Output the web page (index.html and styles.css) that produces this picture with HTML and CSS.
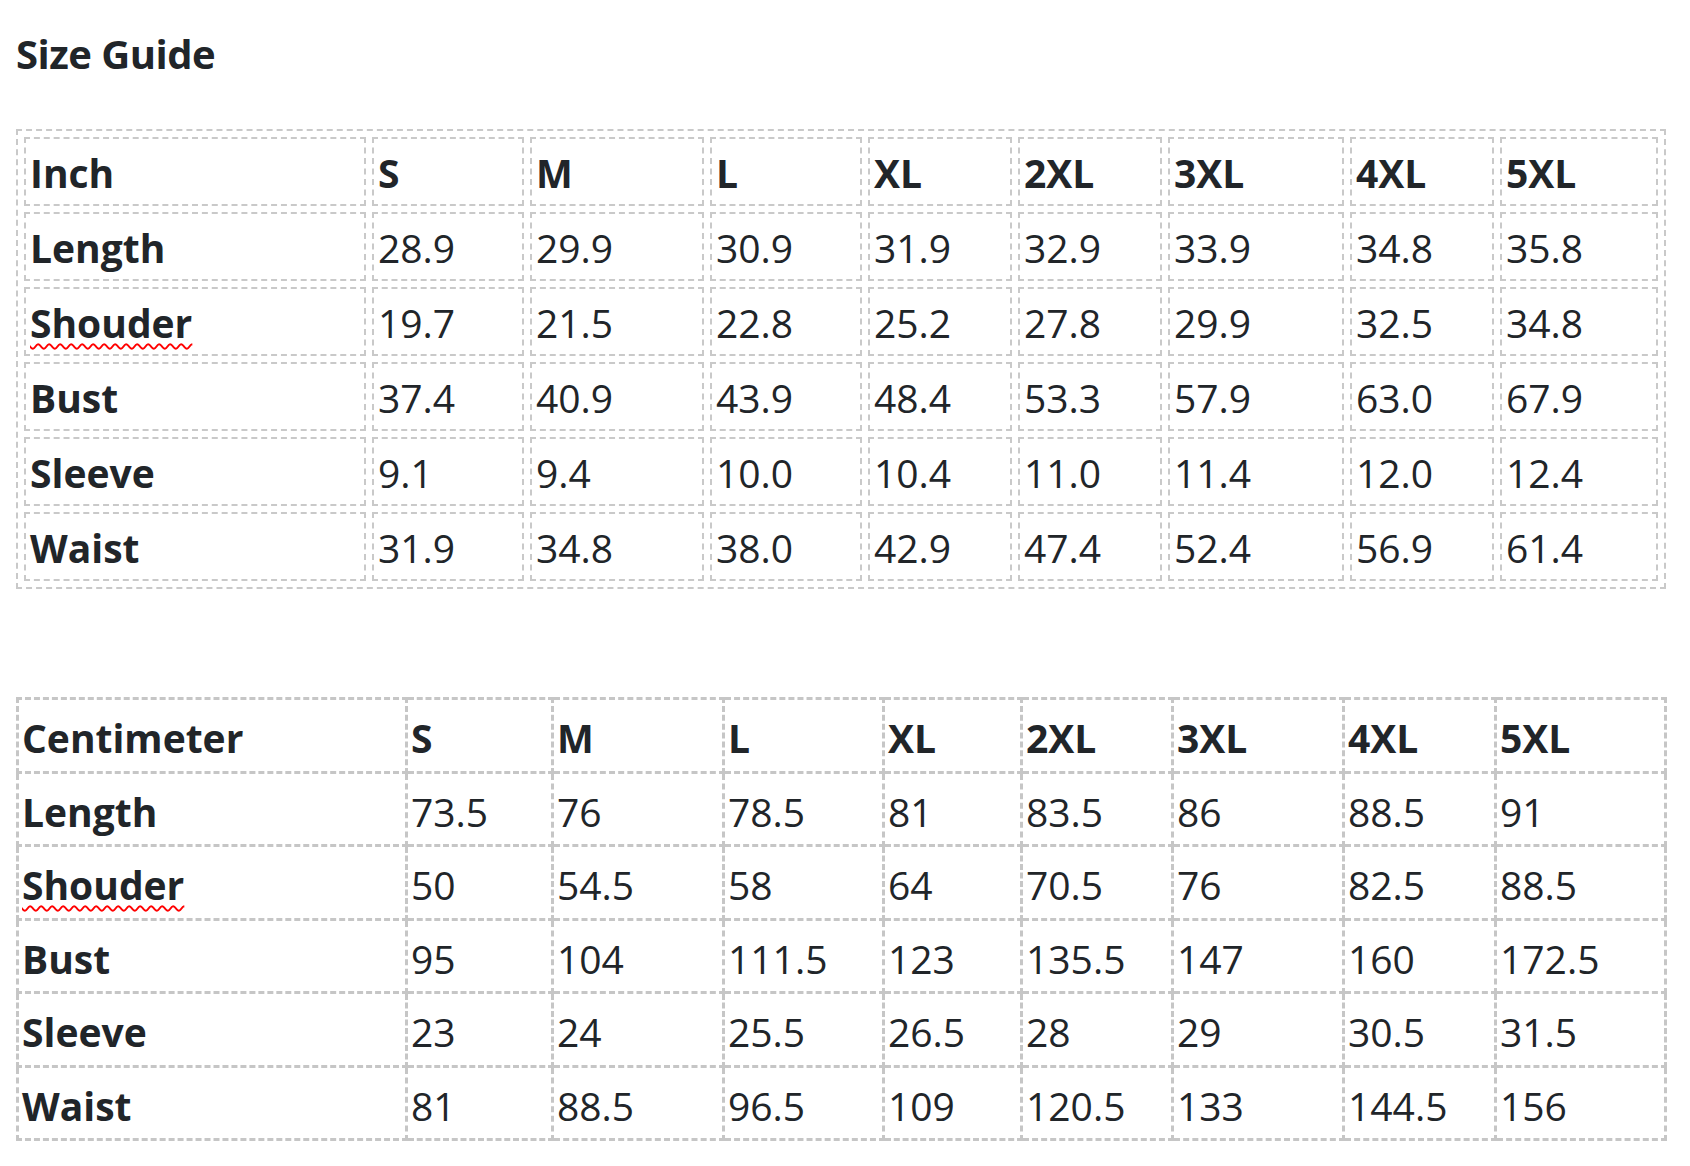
FILE: index.html
```html
<!DOCTYPE html>
<html lang="en">
<head>
<meta charset="utf-8">
<title>Size Guide</title>
<link rel="stylesheet" href="styles.css">
</head>
<body>
<div class="page">
  <h2 class="title">Size Guide</h2>

  <table class="sizes sizes-in">
    <tr>
      <th class="c1">Inch</th><th class="c2">S</th><th class="c3">M</th><th class="c4">L</th><th class="c5">XL</th><th class="c6">2XL</th><th class="c7">3XL</th><th class="c8">4XL</th><th class="c9">5XL</th>
    </tr>
    <tr><th>Length</th><td>28.9</td><td>29.9</td><td>30.9</td><td>31.9</td><td>32.9</td><td>33.9</td><td>34.8</td><td>35.8</td></tr>
    <tr><th><span class="typo">Shouder</span></th><td>19.7</td><td>21.5</td><td>22.8</td><td>25.2</td><td>27.8</td><td>29.9</td><td>32.5</td><td>34.8</td></tr>
    <tr><th>Bust</th><td>37.4</td><td>40.9</td><td>43.9</td><td>48.4</td><td>53.3</td><td>57.9</td><td>63.0</td><td>67.9</td></tr>
    <tr><th>Sleeve</th><td>9.1</td><td>9.4</td><td>10.0</td><td>10.4</td><td>11.0</td><td>11.4</td><td>12.0</td><td>12.4</td></tr>
    <tr><th>Waist</th><td>31.9</td><td>34.8</td><td>38.0</td><td>42.9</td><td>47.4</td><td>52.4</td><td>56.9</td><td>61.4</td></tr>
  </table>

  <table class="sizes sizes-cm">
    <tr>
      <th class="c1">Centimeter</th><th class="c2">S</th><th class="c3">M</th><th class="c4">L</th><th class="c5">XL</th><th class="c6">2XL</th><th class="c7">3XL</th><th class="c8">4XL</th><th class="c9">5XL</th>
    </tr>
    <tr><th>Length</th><td>73.5</td><td>76</td><td>78.5</td><td>81</td><td>83.5</td><td>86</td><td>88.5</td><td>91</td></tr>
    <tr><th><span class="typo">Shouder</span></th><td>50</td><td>54.5</td><td>58</td><td>64</td><td>70.5</td><td>76</td><td>82.5</td><td>88.5</td></tr>
    <tr><th>Bust</th><td>95</td><td>104</td><td>111.5</td><td>123</td><td>135.5</td><td>147</td><td>160</td><td>172.5</td></tr>
    <tr><th>Sleeve</th><td>23</td><td>24</td><td>25.5</td><td>26.5</td><td>28</td><td>29</td><td>30.5</td><td>31.5</td></tr>
    <tr><th>Waist</th><td>81</td><td>88.5</td><td>96.5</td><td>109</td><td>120.5</td><td>133</td><td>144.5</td><td>156</td></tr>
  </table>
</div>
</body>
</html>
```

FILE: styles.css
```css
html, body {
  margin: 0;
  padding: 0;
  background: #ffffff;
}

body {
  font-family: "Open Sans", "Noto Sans", "Liberation Sans", sans-serif;
  color: #212529;
}

.page {
  padding: 29px 0 0 16px;
}

.title {
  margin: 0;
  font-size: 40px;
  line-height: 50px;
  font-weight: 700;
  letter-spacing: -0.5px;
}

.sizes {
  table-layout: fixed;
  font-size: 39px;
  text-align: left;
}

.sizes th,
.sizes td {
  box-sizing: border-box;
  vertical-align: middle;
  white-space: nowrap;
}

.sizes th {
  font-weight: 700;
}

.sizes td {
  font-weight: 400;
}

/* Inch table: separated dashed cells */
.sizes-in {
  margin-top: 50px;
  width: 1650px;
  border: 2px dashed #c9c9c9;
  border-collapse: separate;
  border-spacing: 6px;
}

.sizes-in th,
.sizes-in td {
  border: 2px dashed #c9c9c9;
  padding: 3px 4px 1px 4px;
  line-height: 61px;
}

.sizes-in .c1 { width: 342px; }
.sizes-in .c2 { width: 152px; }
.sizes-in .c3 { width: 174px; }
.sizes-in .c4 { width: 152px; }
.sizes-in .c5 { width: 144px; }
.sizes-in .c6 { width: 144px; }
.sizes-in .c7 { width: 176px; }
.sizes-in .c8 { width: 144px; }
.sizes-in .c9 { width: 158px; }

/* Centimeter table: collapsed dashed grid */
.sizes-cm {
  margin-top: 108px;
  width: 1648px;
  border: 3px dashed #c6c6c6;
  border-collapse: collapse;
}

.sizes-cm th,
.sizes-cm td {
  border: 3px dashed #c6c6c6;
  padding: 5px 2px 0 3px;
  line-height: 65.5px;
}

.sizes-cm .c1 { width: 389px; }
.sizes-cm .c2 { width: 146px; }
.sizes-cm .c3 { width: 171px; }
.sizes-cm .c4 { width: 160px; }
.sizes-cm .c5 { width: 138px; }
.sizes-cm .c6 { width: 151px; }
.sizes-cm .c7 { width: 171px; }
.sizes-cm .c8 { width: 152px; }
.sizes-cm .c9 { width: 170px; }

.typo {
  text-decoration-line: underline;
  text-decoration-style: wavy;
  text-decoration-color: #ff0000;
  text-decoration-thickness: 2px;
  text-decoration-skip-ink: none;
  text-underline-offset: 5px;
}
```
